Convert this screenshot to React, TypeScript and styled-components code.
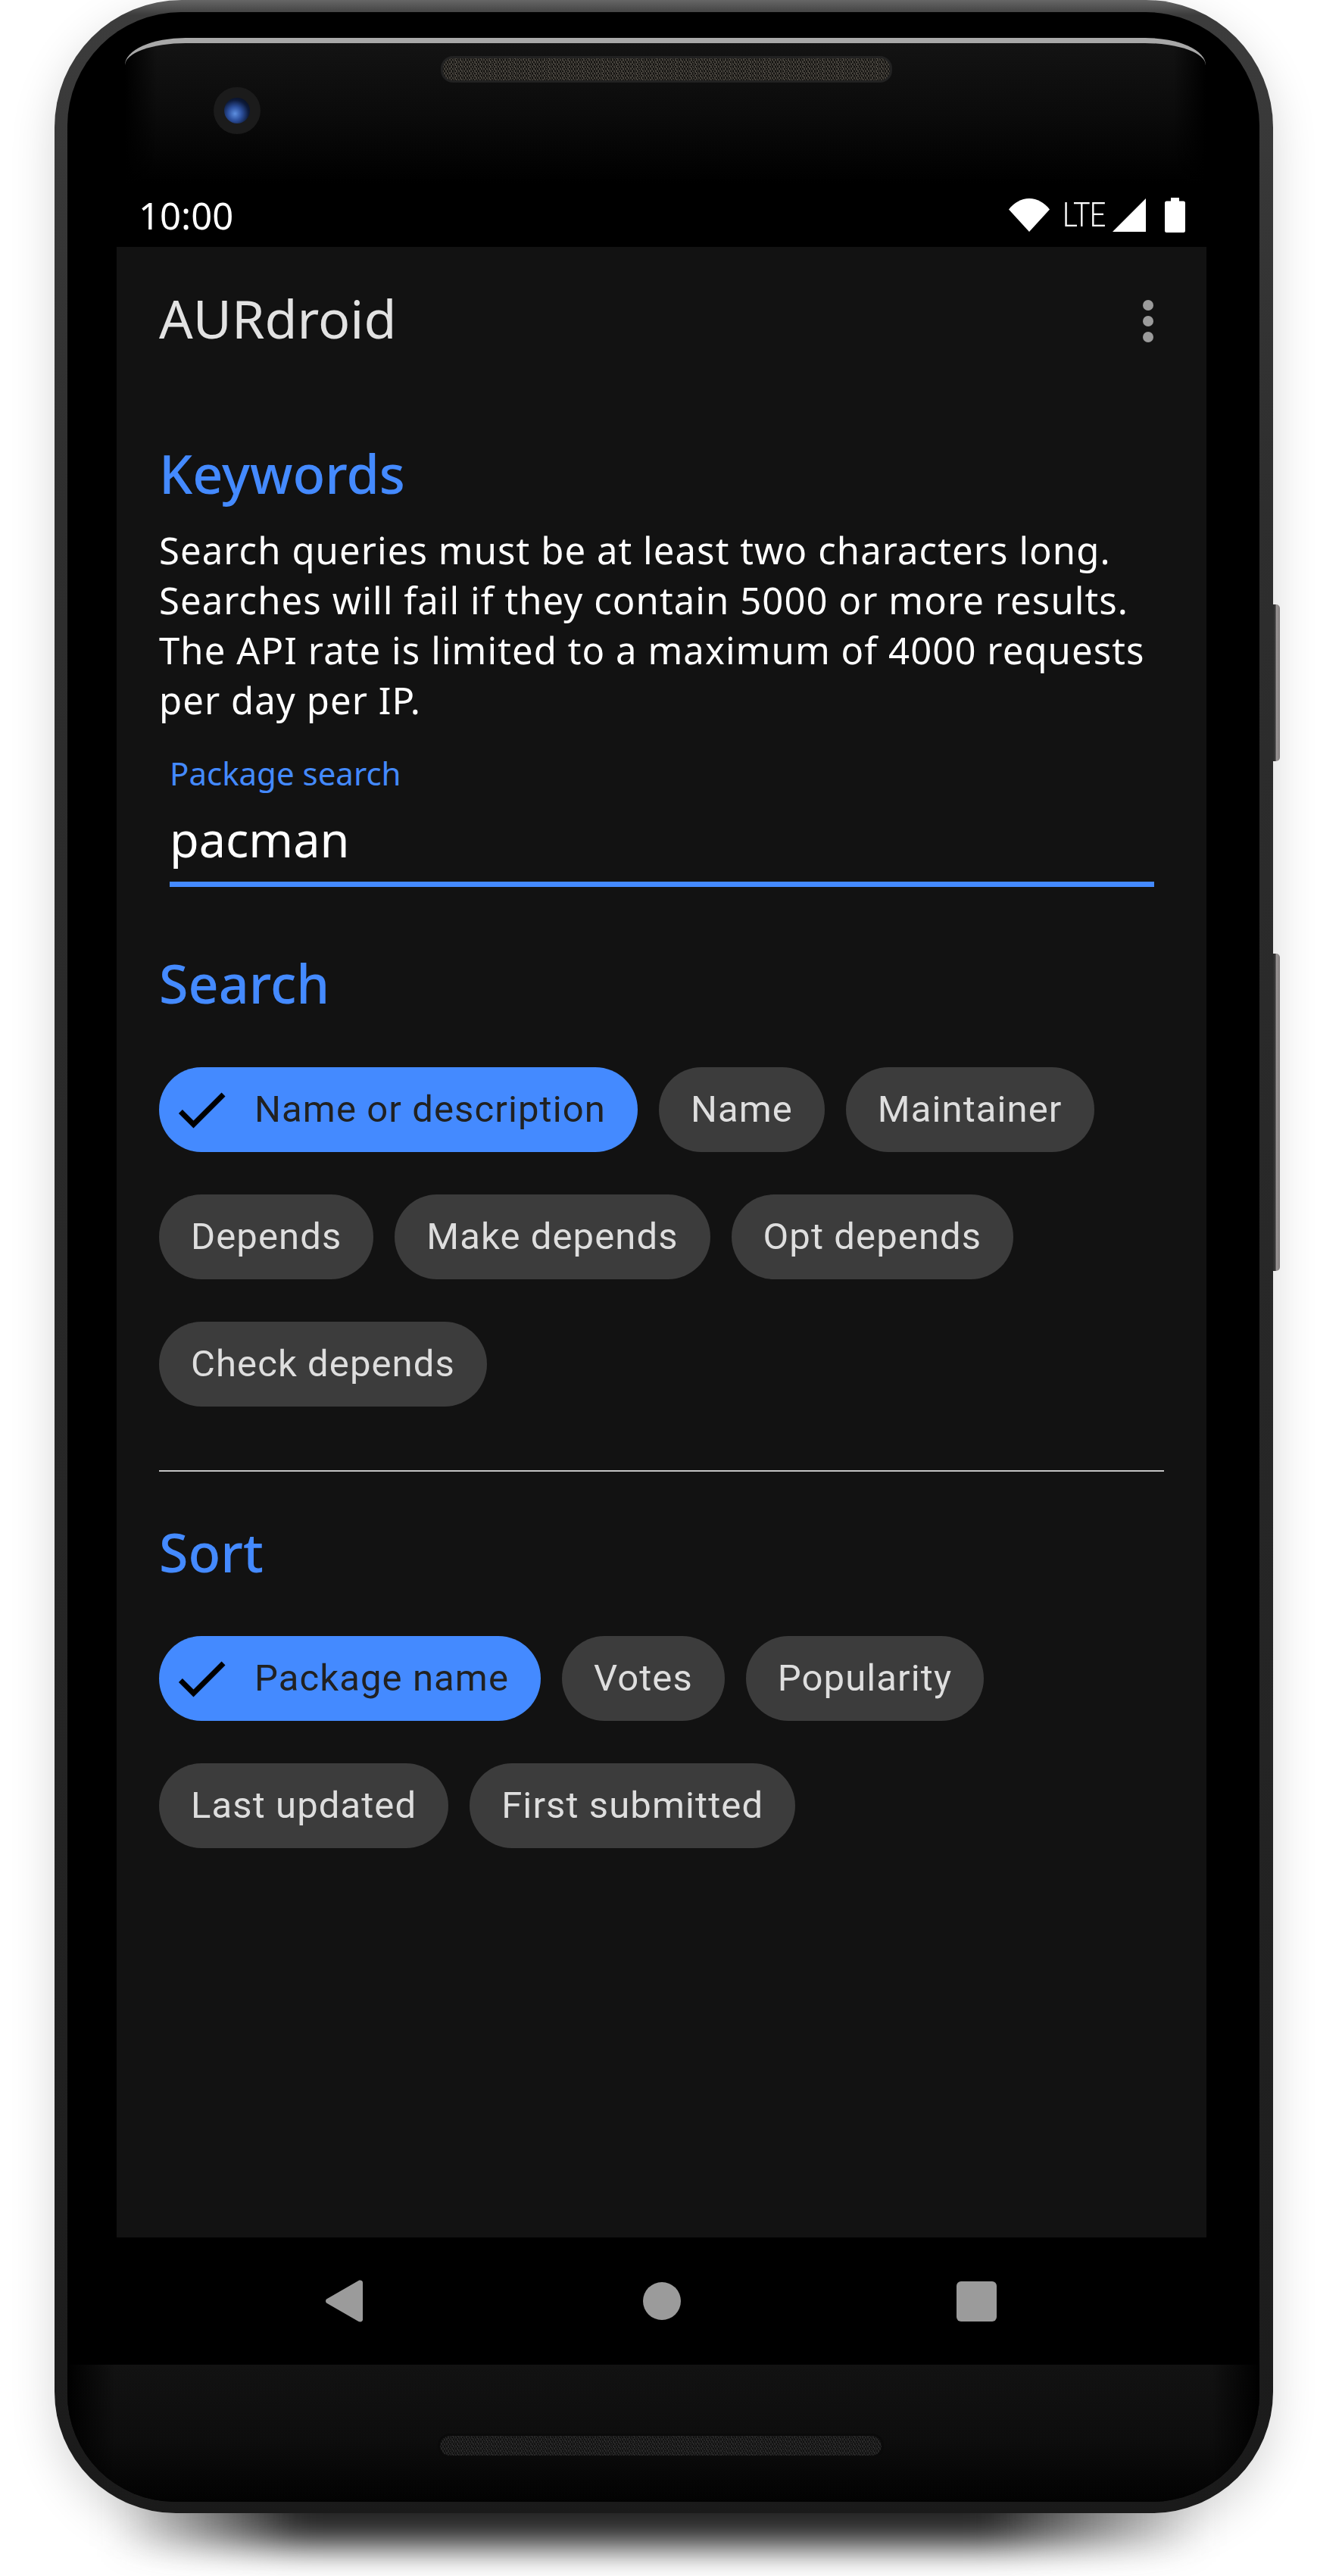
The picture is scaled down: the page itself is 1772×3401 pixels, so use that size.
import React from "react";
import styled, { createGlobalStyle } from "styled-components";

const BLUE = "#448aff";
const BODY_FONT = '"Noto Sans", "Open Sans", sans-serif';
const CHIP_FONT = 'Roboto, "Noto Sans", sans-serif';

const GlobalStyle = createGlobalStyle`
  html, body {
    margin: 0;
    padding: 0;
    background: #fff;
  }
`;

const Page = styled.div`
  position: relative;
  width: 1772px;
  height: 3401px;
  padding-left: 72px;
  box-sizing: border-box;
  overflow: hidden;
  background: #fff;
`;

const GroundShadow = styled.div`
  position: absolute;
  left: 150px;
  top: 3250px;
  width: 1440px;
  height: 112px;
  background: linear-gradient(90deg, rgba(38, 38, 38, 0) 0, #2a2a2a 17%, #2a2a2a 80%, rgba(38, 38, 38, 0) 100%);
  filter: blur(22px);
`;

const Shell = styled.div`
  position: relative;
  width: 1609px;
  height: 3318px;
  padding: 16px 18px 15px 17px;
  box-sizing: border-box;
  border-radius: 168px 168px 160px 160px;
  background: linear-gradient(180deg, #666 0, #3c3c3c 0.6%, #2e2e2e 20%, #242424 70%, #1a1a1a 100%);
  box-shadow: 0 20px 60px rgba(0, 0, 0, 0.16);
`;

const SideButton = styled.div<{ $top: number; $height: number }>`
  position: absolute;
  right: -9px;
  top: ${({ $top }) => $top}px;
  width: 9px;
  height: ${({ $height }) => $height}px;
  border-radius: 0 5px 5px 0;
  background: linear-gradient(90deg, #2c2c2c 0, #3a3a3a 30%, #9a9595 50%, #807c7c 100%);
`;

const Body = styled.div`
  height: 100%;
  display: flex;
  flex-direction: column;
  overflow: hidden;
  border-radius: 150px 150px 142px 142px;
  background: #000;
`;

const TopBezel = styled.div`
  height: 226px;
  flex: none;
  padding: 34px 71px 0 76px;
  box-sizing: border-box;
`;

const Glass = styled.div`
  height: 192px;
  box-sizing: border-box;
  padding: 17px 0 0 417px;
  border-top: 7px solid #a8a8a8;
  border-radius: 80px 80px 0 0 / 36px 36px 0 0;
  background:
    linear-gradient(90deg, #000 0, rgba(0, 0, 0, 0) 3%, rgba(0, 0, 0, 0) 97%, #000 100%),
    linear-gradient(180deg, #131313 0, #0b0b0b 50%, #000 100%);
`;

const Speaker = styled.div<{ $dim?: boolean }>`
  height: 35px;
  box-sizing: border-box;
  border-radius: 16px;
  border: 3px solid ${({ $dim }) => ($dim ? "#0a0a0a" : "#222")};
  background-color: ${({ $dim }) => ($dim ? "#111" : "#141311")};
  background-image: repeating-linear-gradient(
      60deg,
      ${({ $dim }) => ($dim ? "#2a2a2a" : "#4a463f")} 0 1px,
      transparent 1px 3px
    ),
    repeating-linear-gradient(
      -60deg,
      ${({ $dim }) => ($dim ? "#222" : "#3c3934")} 0 1px,
      transparent 1px 3px
    );
`;

const TopSpeaker = styled(Speaker)`
  width: 596px;
`;

const Camera = styled.div`
  width: 62px;
  height: 62px;
  margin: 6px 0 0 -300px;
  display: flex;
  align-items: center;
  justify-content: center;
  border-radius: 50%;
  background: #1b1b1b;
`;

const Lens = styled.div`
  width: 34px;
  height: 34px;
  border-radius: 50%;
  background: radial-gradient(circle at 42% 62%, #5d8fe0 0, #2c4f9c 32%, #0d1a3a 62%, #03050c 100%);
`;

const Screen = styled.div`
  width: 1439px;
  margin-left: 65px;
  flex: none;
  display: flex;
  flex-direction: column;
  background: #121212;
`;

const StatusBar = styled.div`
  height: 84px;
  padding: 0 28px 0 29px;
  display: flex;
  align-items: center;
  justify-content: space-between;
  background: #000;
  color: #fff;
`;

const Clock = styled.span`
  font: 400 49px/84px ${BODY_FONT};
`;

const StatusIcons = styled.div`
  display: flex;
  align-items: center;
`;

const Lte = styled.span`
  width: 57px;
  margin: 0 9px 0 17px;
  font: 300 45px/44px ${CHIP_FONT};
  letter-spacing: -1px;
  white-space: nowrap;
  transform: scaleX(0.84);
  transform-origin: left center;
`;

const AppBar = styled.div`
  height: 196px;
  padding: 0 70px 0 56px;
  display: flex;
  align-items: center;
  justify-content: space-between;
`;

const AppTitle = styled.h1`
  margin: 0 0 8px;
  color: #e2e2e2;
  font: 400 70px/84px ${BODY_FONT};
`;

const Content = styled.main`
  height: 2432px;
  padding: 0 56px;
  box-sizing: border-box;
`;

const Heading = styled.h2<{ $top: number }>`
  margin: ${({ $top }) => $top}px 0 0;
  color: ${BLUE};
  font: 500 70px/100px ${BODY_FONT};
`;

const Intro = styled.p`
  margin: 18px 0 0;
  color: #fff;
  font: 400 49px/66px ${BODY_FONT};
  letter-spacing: 1.08px;
  white-space: nowrap;
`;

const Field = styled.div`
  margin: 36px 13px 0 14px;
  border-bottom: 7px solid ${BLUE};
`;

const FieldLabel = styled.div`
  color: ${BLUE};
  font: 400 42px/56px ${BODY_FONT};
`;

const FieldValue = styled.div`
  margin-top: 17px;
  padding-bottom: 14px;
  color: #fff;
  font: 400 63px/84px ${BODY_FONT};
`;

const ChipWrap = styled.div`
  margin-top: 61px;
  display: flex;
  flex-wrap: wrap;
  gap: 56px 28px;
`;

const Chip = styled.div<{ $selected?: boolean }>`
  height: 112px;
  box-sizing: border-box;
  padding: ${({ $selected }) => ($selected ? "0 42px 0 14px" : "0 42px")};
  display: flex;
  align-items: center;
  border-radius: 56px;
  background: ${({ $selected }) => ($selected ? BLUE : "#3c3c3c")};
  color: ${({ $selected }) => ($selected ? "#212121" : "#dedede")};
  font: 400 49px/60px ${CHIP_FONT};
  letter-spacing: 1.1px;
  white-space: nowrap;
`;

const CheckSvg = styled.svg`
  width: 84px;
  height: 84px;
  margin-right: 28px;
  flex: none;
`;

const Divider = styled.hr`
  height: 2px;
  margin: 84px 0 0;
  border: 0;
  background: #c4c4c4;
`;

const NavBar = styled.div`
  height: 168px;
  padding: 0 277px 0 276px;
  box-sizing: border-box;
  display: flex;
  align-items: center;
  justify-content: space-between;
  background: #000;
`;

const NavCircle = styled.div`
  width: 50px;
  height: 50px;
  margin-left: 6px;
  border-radius: 50%;
  background: #9b9b9b;
`;

const NavSquare = styled.div`
  width: 53px;
  height: 53px;
  border-radius: 6px;
  background: #9b9b9b;
`;

const BottomBezel = styled.div`
  flex: 1;
  padding: 91px 0 0 489px;
  background:
    linear-gradient(90deg, #000 0, rgba(0, 0, 0, 0) 4%, rgba(0, 0, 0, 0) 96%, #000 100%),
    linear-gradient(180deg, #121212 0, #0d0d0d 55%, #020202 100%);
`;

const BottomSpeaker = styled(Speaker)`
  width: 589px;
  height: 32px;
`;

const WifiIcon = () => (
  <svg width="54" height="44" viewBox="0 0 54 44">
    <path d="M0 14.500C7 5.500 16.500 0 27 0s20 5.500 27 14.500L27 44z" fill="#fff" />
  </svg>
);

const SignalIcon = () => (
  <svg width="44" height="44" viewBox="0 0 44 44">
    <path d="M0 44L44 0v44z" fill="#fff" />
  </svg>
);

const BatteryIcon = () => (
  <svg width="27" height="46" viewBox="0 0 27 46" style={{ marginLeft: 25 }}>
    <path
      d="M8 0h11v4.500h5.500a2.500 2.500 0 0 1 2.500 2.500v36.500a2.500 2.500 0 0 1-2.500 2.500h-22A2.500 2.500 0 0 1 0 43.500V7a2.500 2.500 0 0 1 2.500-2.500H8z"
      fill="#fff"
    />
  </svg>
);

const MoreIcon = () => (
  <svg width="14" height="56" viewBox="0 0 14 56">
    <circle cx="7" cy="7" r="7" fill="#9b9b9b" />
    <circle cx="7" cy="28" r="7" fill="#9b9b9b" />
    <circle cx="7" cy="49" r="7" fill="#9b9b9b" />
  </svg>
);

const BackIcon = () => (
  <svg width="49" height="56" viewBox="0 0 49 56">
    <path
      d="M1 25.500L43.500 1C46 0 49 1 49 3.500v49c0 2.500-3 3.500-5.500 2.500L1 30.500c-1.300-1.500-1.300-3.500 0-5z"
      fill="#9b9b9b"
    />
  </svg>
);

const CheckIcon = () => (
  <CheckSvg viewBox="0 0 24 24">
    <path d="M9 16.170L4.830 12l-1.420 1.410L9 19 21 7l-1.410-1.410z" fill="#000" />
  </CheckSvg>
);

const searchChips = [
  "Name or description",
  "Name",
  "Maintainer",
  "Depends",
  "Make depends",
  "Opt depends",
  "Check depends",
];
const sortChips = ["Package name", "Votes", "Popularity", "Last updated", "First submitted"];

const ChipGroup = ({ items }: { items: string[] }) => (
  <ChipWrap>
    {items.map((label, i) => (
      <Chip key={label} $selected={i === 0}>
        {i === 0 && <CheckIcon />}
        {label}
      </Chip>
    ))}
  </ChipWrap>
);

export default function App() {
  return (
    <Page>
      <GlobalStyle />
      <GroundShadow />
      <Shell>
        <SideButton $top={798} $height={207} />
        <SideButton $top={1259} $height={419} />
        <Body>
          <TopBezel>
            <Glass>
              <TopSpeaker />
              <Camera>
                <Lens />
              </Camera>
            </Glass>
          </TopBezel>
          <Screen>
            <StatusBar>
              <Clock>10:00</Clock>
              <StatusIcons>
                <WifiIcon />
                <Lte>LTE</Lte>
                <SignalIcon />
                <BatteryIcon />
              </StatusIcons>
            </StatusBar>
            <AppBar>
              <AppTitle>AURdroid</AppTitle>
              <MoreIcon />
            </AppBar>
            <Content>
              <Heading $top={53}>Keywords</Heading>
              <Intro>
                Search queries must be at least two characters long.
                <br />
                Searches will fail if they contain 5000 or more results.
                <br />
                The API rate is limited to a maximum of 4000 requests
                <br />
                per day per IP.
              </Intro>
              <Field>
                <FieldLabel>Package search</FieldLabel>
                <FieldValue>pacman</FieldValue>
              </Field>
              <Heading $top={77}>Search</Heading>
              <ChipGroup items={searchChips} />
              <Divider />
              <Heading $top={56}>Sort</Heading>
              <ChipGroup items={sortChips} />
            </Content>
            <NavBar>
              <BackIcon />
              <NavCircle />
              <NavSquare />
            </NavBar>
          </Screen>
          <BottomBezel>
            <BottomSpeaker $dim />
          </BottomBezel>
        </Body>
      </Shell>
    </Page>
  );
}
